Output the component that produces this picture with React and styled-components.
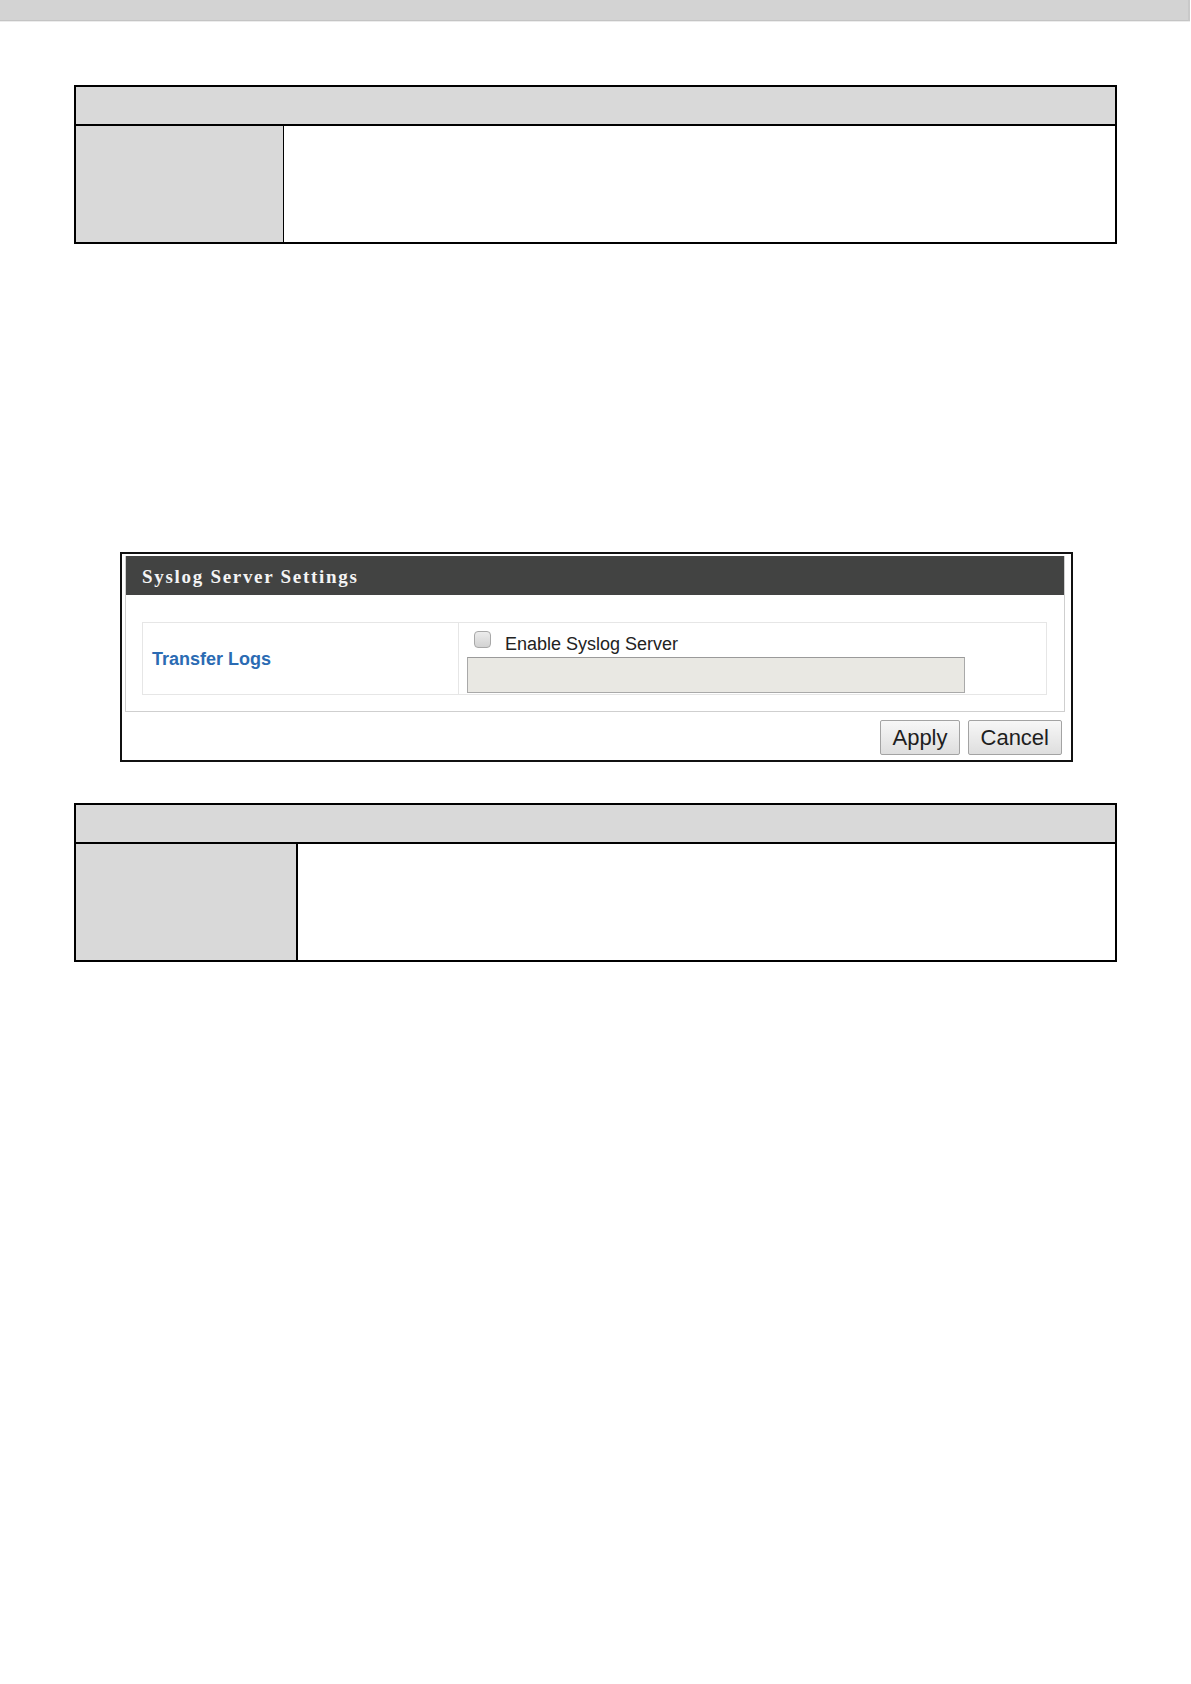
import React from "react";
import styled, { createGlobalStyle } from "styled-components";

const Global = createGlobalStyle`
  html, body { margin: 0; padding: 0; background: #ffffff; }
  body { font-family: "Liberation Sans", Arial, sans-serif; }
`;

const Page = styled.div`
  width: 1191px;
  min-height: 1684px;
  background: #fff;
`;

const TopBar = styled.div`
  width: 1188px;
  height: 20px;
  background: #d3d3d3;
  border-bottom: 1px solid #c4c4c4;
  border-right: 2px solid #c9c9c9;
  box-shadow: 0 1px 0 #ececec;
`;

const DocTable = styled.div`
  display: grid;
  grid-template-columns: ${(p) => p.$label}px 1fr;
  grid-template-rows: 39px ${(p) => p.$body}px;
  width: 1043px;
  box-sizing: border-box;
  margin: ${(p) => p.$top}px 0 0 74px;
  border: 2px solid #000;
`;

const DocHead = styled.div`
  grid-column: 1 / span 2;
  background: #d9d9d9;
  border-bottom: 2px solid #000;
`;

const DocLabel = styled.div`
  background: #d9d9d9;
  border-right: ${(p) => p.$rule}px solid #000;
`;

const DocBody = styled.div`
  background: #fff;
`;

const Shot = styled.div`
  box-sizing: border-box;
  width: 953px;
  margin: 308px 0 0 120px;
  border: 2px solid #111;
  padding: 2px 6px 3px 3px;
  background: #fff;
`;

const Panel = styled.div`
  border: 1px solid #cfcfcf;
  border-top: none;
  padding-bottom: 16px;
`;

const PanelHead = styled.div`
  height: 39px;
  line-height: 41px;
  background: #424342;
  color: #f4f4f4;
  font-family: "Liberation Serif", "Times New Roman", serif;
  font-weight: bold;
  font-size: 19px;
  letter-spacing: 1.7px;
  padding-left: 16px;
`;

const Row = styled.div`
  display: grid;
  grid-template-columns: 316px 1fr;
  margin: 27px 17px 0 16px;
  border: 1px solid #e6e6e6;
  min-height: 71px;
`;

const RowLabel = styled.div`
  display: flex;
  align-items: center;
  padding: 2px 0 0 9px;
  border-right: 1px solid #e6e6e6;
  color: #2b6bb3;
  font-weight: bold;
  font-size: 18px;
`;

const RowValue = styled.div`
  padding: 8px 0 1px 8px;
`;

const CheckLine = styled.label`
  display: flex;
  align-items: center;
  height: 26px;
  font-size: 18px;
  color: #222;
`;

const Check = styled.input`
  appearance: none;
  margin: 0 14px 9px 7px;
  width: 17px;
  height: 17px;
  border: 1px solid #a8a8a8;
  border-radius: 4px;
  background: linear-gradient(#ececec, #d2d2d2);
  box-sizing: border-box;
`;

const Field = styled.input`
  display: block;
  box-sizing: border-box;
  margin-top: 0;
  width: 498px;
  height: 36px;
  background: #e9e8e3;
  border: 1px solid #a9a9a9;
  border-top-color: #9a9a9a;
`;

const Actions = styled.div`
  display: flex;
  justify-content: flex-end;
  gap: 8px;
  padding: 8px 3px 2px 0;
`;

const Btn = styled.button`
  height: 35px;
  padding: 0 ${(p) => p.$pad}px;
  font-family: "Liberation Sans", Arial, sans-serif;
  font-size: 22px;
  color: #1e1e1e;
  background: linear-gradient(#f7f7f7, #dedede);
  border: 1px solid #a3a3a3;
  border-radius: 2px;
  line-height: 33px;
`;

export default function App() {
  return (
    <Page>
      <Global />
      <TopBar />
      <DocTable $top={64} $label={208} $body={116}>
        <DocHead />
        <DocLabel $rule={1} />
        <DocBody />
      </DocTable>

      <Shot>
        <Panel>
          <PanelHead>Syslog Server Settings</PanelHead>
          <Row>
            <RowLabel>Transfer Logs</RowLabel>
            <RowValue>
              <CheckLine>
                <Check type="checkbox" />
                Enable Syslog Server
              </CheckLine>
              <Field type="text" disabled />
            </RowValue>
          </Row>
        </Panel>
        <Actions>
          <Btn $pad={11}>Apply</Btn>
          <Btn $pad={12}>Cancel</Btn>
        </Actions>
      </Shot>

      <DocTable $top={41} $label={222} $body={116}>
        <DocHead />
        <DocLabel $rule={2} />
        <DocBody />
      </DocTable>
    </Page>
  );
}
